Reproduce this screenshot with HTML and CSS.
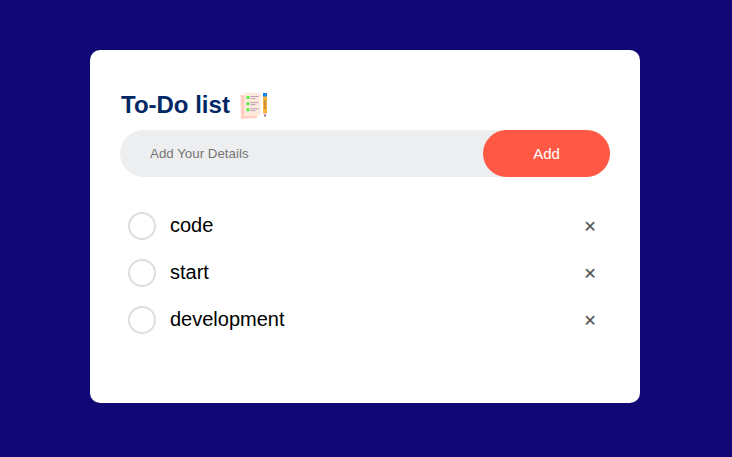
FILE: index.html
```html
<!DOCTYPE html>
<html lang="en">
<head>
<meta charset="utf-8">
<title>To-Do list</title>
<link rel="stylesheet" href="styles.css">
</head>
<body>
<main class="card">
  <h1 class="title">To-Do list
    <svg class="title-icon" viewBox="0 0 30 28" aria-hidden="true">
      <path d="M1.500 3h5v20l12 1-1 2-15.500 1z" fill="#ffcfc2"/>
      <path d="M5.500 .7H21.500V22L19.500 24H5z" fill="#ffe8dc"/>
      <g fill="#55ee45"><circle cx="9" cy="5.500" r="1.700"/><circle cx="9" cy="11.700" r="1.700"/><circle cx="9" cy="17.800" r="1.700"/></g>
      <path d="M11.500 4.500h8M11.500 6.500h5M11.500 10.600h8M11.500 12.600h5M11.500 16.800h8M11.500 18.700h5" stroke="#b8a2b5" stroke-width="1"/>
      <path d="M24 4h4v17h-4z" fill="#ffb33f"/>
      <path d="M24 1h4v3.500h-4z" fill="#0b88f5"/>
      <path d="M26 8v9" stroke="#a3712f" stroke-width="1"/>
      <path d="M24 21h4l-2 4z" fill="#f2bfc8"/>
      <path d="M25.200 23h1.600L26 25z" fill="#221a32"/>
    </svg>
  </h1>
  <form class="row">
    <input class="entry" type="text" placeholder="Add Your Details">
    <button class="add" type="button">Add</button>
  </form>
  <ul class="tasks">
    <li class="task"><span class="check"></span><span class="label">code</span><span class="remove">×</span></li>
    <li class="task"><span class="check"></span><span class="label">start</span><span class="remove">×</span></li>
    <li class="task"><span class="check"></span><span class="label">development</span><span class="remove">×</span></li>
  </ul>
</main>
</body>
</html>
```
FILE: styles.css
```css
* { box-sizing: border-box; margin: 0; padding: 0; }
body {
  height: 457px;
  overflow: hidden;
  padding: 50px 92px 0 90px;
  background: #110775;
  font-family: "Liberation Sans", Arial, sans-serif;
}
.card {
  width: 550px;
  height: 353px;
  padding: 40px 30px;
  border-radius: 10px;
  background: #fff;
}
.title {
  display: flex;
  align-items: center;
  gap: 9px;
  height: 30px;
  margin-bottom: 10px;
  padding-left: 1px;
  color: #002765;
  font-size: 24px;
  line-height: 30px;
}
.title-icon { width: 30px; height: 28px; margin-top: 2px; }
.row {
  display: flex;
  height: 47px;
  border-radius: 30px;
  background: #edeef0;
}
.entry {
  flex: 1;
  min-width: 0;
  padding-left: 30px;
  border: 0;
  outline: 0;
  background: transparent;
  font-family: inherit;
  font-size: 13.333px;
}
.entry::placeholder { color: #757575; }
.add {
  width: 127px;
  border: 0;
  border-radius: 40px;
  background: #ff5945;
  color: #fff;
  font-family: inherit;
  font-size: 15px;
}
.tasks { padding-top: 25px; list-style: none; }
.task {
  display: flex;
  align-items: center;
  height: 47px;
  padding: 0 14px 0 8px;
  font-size: 20px;
}
.check {
  width: 28px;
  height: 28px;
  margin-right: 14px;
  border: 2px solid #dedede;
  border-radius: 50%;
}
.label { flex: 1; line-height: 24px; margin-bottom: 2px; }
.remove {
  color: #555;
  font-size: 20px;
  line-height: 24px;
  -webkit-text-stroke: .25px #555;
}
```
